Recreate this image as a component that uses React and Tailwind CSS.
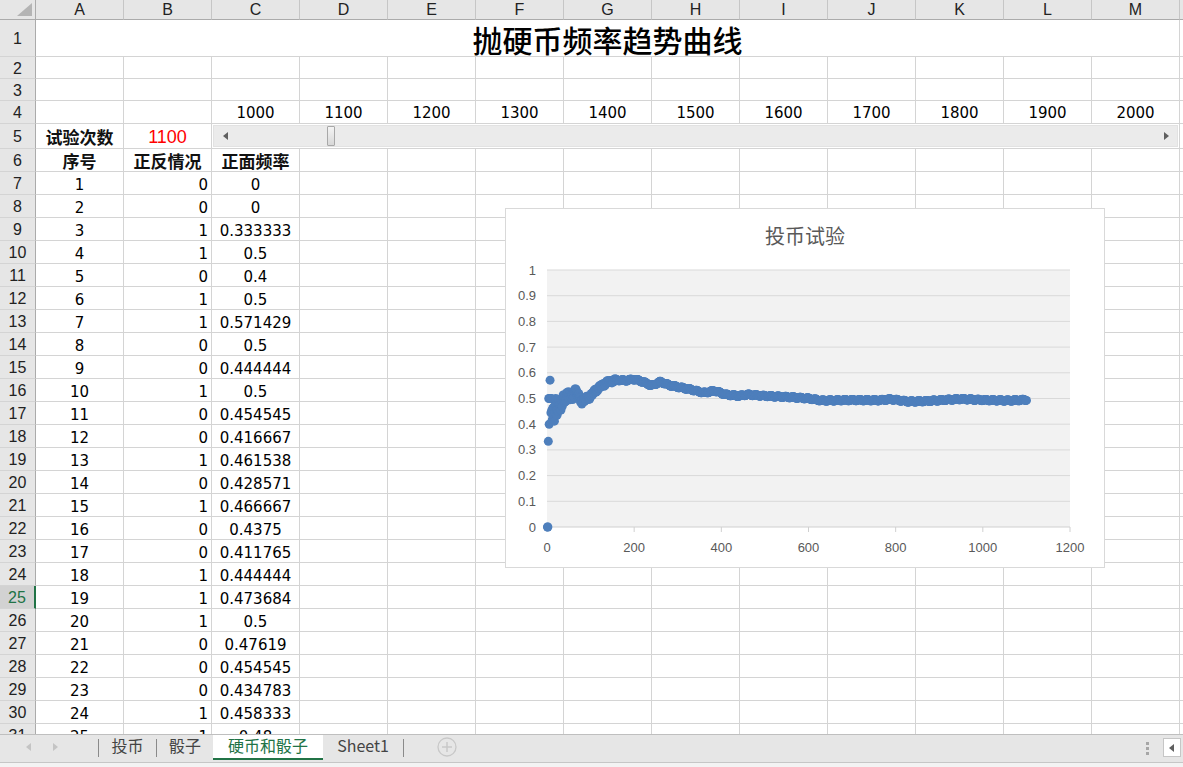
import React from 'react';

const BV = [0,0,1,1,0,1,1,0,0,1,0,0,1,0,1,0,0,1,1,1,0,0,0,1,1];
const CV = ['0','0','0.333333','0.5','0.4','0.5','0.571429','0.5','0.444444','0.5','0.454545','0.416667','0.461538','0.428571','0.466667','0.4375','0.411765','0.444444','0.473684','0.5','0.47619','0.454545','0.434783','0.458333','0.48'];
const COLS = ['A','B','C','D','E','F','G','H','I','J','K','L','M','N'];

const KP = [[25,0.48],[30,0.47],[35,0.49],[40,0.5],[45,0.51],[50,0.52],[55,0.5],[60,0.51],[65,0.535],[70,0.52],[75,0.5],[80,0.49],[90,0.5],[100,0.51],[110,0.53],[125,0.55],[140,0.565],[160,0.572],[180,0.57],[200,0.575],[220,0.565],[240,0.55],[260,0.565],[280,0.552],[300,0.545],[330,0.535],[360,0.522],[385,0.53],[410,0.515],[440,0.51],[460,0.515],[500,0.51],[560,0.505],[600,0.5],[630,0.492],[700,0.494],[760,0.493],[790,0.497],[830,0.488],[870,0.49],[920,0.495],[950,0.498],[1000,0.494],[1060,0.492],[1100,0.495]];

function interp(n) {
  for (let i = 0; i < KP.length - 1; i++) {
    const [a, va] = KP[i];
    const [b, vb] = KP[i + 1];
    if (n >= a && n <= b) return va + (vb - va) * (n - a) / (b - a);
  }
  return KP[KP.length - 1][1];
}

const SERIES = (() => {
  const out = [];
  const freq = CV.map(Number);
  for (let n = 1; n <= 1100; n++) {
    let v;
    if (n <= 25) v = freq[n - 1];
    else {
      v = interp(n);
      if (n < 160) v += (0.6 / n) * Math.sin(n * 2.1) + (0.3 / n) * Math.sin(n * 0.7);
      v += 0.0025 * Math.sin(n * 0.37);
    }
    out.push([n, v]);
  }
  return out;
})();

const CJK = "font-['Noto_Sans_CJK_SC',sans-serif]";
const NUM = "font-['DejaVu_Sans',sans-serif]";

function Cell({ children, className = '', w = 'w-[88px]' }) {
  return (
    <div className={`${w} shrink-0 border-r border-b border-[#d4d4d4] flex items-center overflow-visible whitespace-nowrap ${className}`}>
      {children}
    </div>
  );
}

function RowHead({ label, active }) {
  return (
    <div
      className={`w-[36px] shrink-0 border-b border-b-[#d4d4d4] flex items-center justify-center pt-[2px] text-[16px] font-['Liberation_Sans',sans-serif] ${
        active
          ? 'bg-[#d2d2d2] text-[#217346] border-r-2 border-r-[#217346]'
          : 'bg-[#e6e6e6] text-[#222] border-r border-r-[#ababab]'
      }`}
    >
      {label}
    </div>
  );
}

function Row({ h, label, active, children }) {
  return (
    <div className={`flex ${h} shrink-0`}>
      <RowHead label={label} active={active} />
      {children}
    </div>
  );
}

function EmptyCells({ from = 0 }) {
  return COLS.slice(from).map((c) => <Cell key={c} />);
}

function Chart() {
  const PL = 42, PT = 62, PW = 523, PH = 257;
  const xs = (n) => PL + (n / 1200) * PW;
  const ys = (v) => PT + (1 - v) * PH;
  const yTicks = [0, 0.1, 0.2, 0.3, 0.4, 0.5, 0.6, 0.7, 0.8, 0.9, 1];
  const xTicks = [0, 200, 400, 600, 800, 1000, 1200];
  return (
    <div className="absolute left-[505px] top-[208px] w-[600px] h-[360px] bg-white border border-[#d9d9d9]">
      <svg width="598" height="358" viewBox="1 1 598 358">
        <text x="300" y="36" textAnchor="middle" fontSize="20" fill="#595959" fontFamily="'Noto Sans CJK SC', sans-serif">投币试验</text>
        <rect x={PL} y={PT} width={PW} height={PH} fill="#f2f2f2" />
        {yTicks.map((t) => (
          <g key={t}>
            <line x1={PL} x2={PL + PW} y1={ys(t)} y2={ys(t)} stroke={t === 0 ? '#d0d0d0' : '#d9d9d9'} strokeWidth="1" />
            <text x="31" y={ys(t) + 4.5} textAnchor="end" fontSize="13" fill="#595959" fontFamily="'Liberation Sans', sans-serif">{t}</text>
          </g>
        ))}
        {xTicks.map((t) => (
          <g key={t}>
            <line x1={xs(t)} x2={xs(t)} y1={PT + PH} y2={PT + PH + 5} stroke="#d0d0d0" strokeWidth="1" />
            <text x={xs(t)} y="344" textAnchor="middle" fontSize="13" fill="#595959" fontFamily="'Liberation Sans', sans-serif">{t}</text>
          </g>
        ))}
        {SERIES.map(([n, v]) => (
          <circle key={n} cx={xs(n)} cy={ys(v)} r="4.5" fill="#4e7fbc" />
        ))}
      </svg>
    </div>
  );
}

export default function App() {
  const dataRows = [];
  for (let i = 0; i < 25; i++) {
    const r = i + 7;
    dataRows.push(
      <Row key={r} h="h-[23px]" label={r} active={r === 25}>
        <Cell className={`justify-center pt-[4px] text-[15px] text-black ${NUM}`}>{i + 1}</Cell>
        <Cell className={`justify-end pt-[4px] pr-[3px] text-[15px] text-black ${NUM}`}>{BV[i]}</Cell>
        <Cell className={`justify-center pt-[4px] text-[15px] text-black ${NUM}`}>{CV[i]}</Cell>
        <EmptyCells from={3} />
      </Row>
    );
  }

  return (
    <div className="w-[1183px] h-[767px] overflow-hidden bg-white flex flex-col">
      <div className="relative h-[734px] shrink-0 overflow-hidden">
        {/* column headers */}
        <div className="flex h-[20px]">
          <div className="w-[36px] shrink-0 bg-[#e6e6e6] border-r border-b border-[#ababab] relative">
            <svg width="35" height="19" className="absolute left-0 top-0">
              <polygon points="17,16 32,16 32,3" fill="#b4b4b4" />
            </svg>
          </div>
          {COLS.map((c) => (
            <div
              key={c}
              className="w-[88px] shrink-0 bg-[#e6e6e6] border-r border-r-[#c6c6c6] border-b border-b-[#ababab] flex items-center justify-center text-[16px] text-[#222] font-['Liberation_Sans',sans-serif]"
            >
              {c}
            </div>
          ))}
        </div>

        {/* row 1 */}
        <Row h="h-[37px]" label="1">
          <Cell w="w-[1144px]" className={`justify-center pt-[2px] text-[30px] font-medium text-black ${CJK}`}>
            抛硬币频率趋势曲线
          </Cell>
          <Cell />
        </Row>
        <Row h="h-[22px]" label="2"><EmptyCells /></Row>
        <Row h="h-[22px]" label="3"><EmptyCells /></Row>
        <Row h="h-[23px]" label="4">
          <Cell />
          <Cell />
          {[1000, 1100, 1200, 1300, 1400, 1500, 1600, 1700, 1800, 1900, 2000].map((v) => (
            <Cell key={v} className={`justify-center pt-[3px] text-[15px] text-black ${NUM}`}>{v}</Cell>
          ))}
          <Cell />
        </Row>
        <Row h="h-[25px]" label="5">
          <Cell className={`justify-center pt-[2px] text-[17px] font-bold text-[#111] ${CJK}`}>试验次数</Cell>
          <Cell className="justify-center pt-[2px] text-[18px] text-[#ff0000] font-['Liberation_Sans',sans-serif]">1100</Cell>
          <div className="w-[968px] shrink-0 border-r border-b border-[#d4d4d4] p-px">
            <div className="h-full bg-[#ebebeb] border border-[#e2e2e2] flex items-center relative">
              <svg width="8" height="10" className="ml-[8px]">
                <polygon points="6,1 6,9 1,5" fill="#606060" />
              </svg>
              <div className="ml-[97px] w-[8px] h-[20px] rounded-[1px] border border-[#a8a8a8] bg-gradient-to-b from-[#f4f4f4] to-[#d8d8d8]" />
              <div className="flex-1" />
              <svg width="8" height="10" className="mr-[7px]">
                <polygon points="2,1 2,9 7,5" fill="#606060" />
              </svg>
            </div>
          </div>
          <Cell />
        </Row>
        <Row h="h-[23px]" label="6">
          <Cell className={`justify-center pt-[2px] text-[17px] font-bold text-[#111] ${CJK}`}>序号</Cell>
          <Cell className={`justify-center pt-[2px] text-[17px] font-bold text-[#111] ${CJK}`}>正反情况</Cell>
          <Cell className={`justify-center pt-[2px] text-[17px] font-bold text-[#111] ${CJK}`}>正面频率</Cell>
          <EmptyCells from={3} />
        </Row>
        {dataRows}

        <Chart />
      </div>

      {/* sheet tabs */}
      <div className="h-[28px] shrink-0 bg-[#e6e6e6] border-t border-[#bfbfbf] flex items-start relative">
        <div className="w-[98px] h-full flex items-center">
          <svg width="8" height="10" className="ml-[25px] -mt-[4px]">
            <polygon points="6,1 6,9 1,5" fill="#c4c4c4" />
          </svg>
          <svg width="8" height="10" className="ml-[18px] -mt-[4px]">
            <polygon points="2,1 2,9 7,5" fill="#c4c4c4" />
          </svg>
        </div>
        <div className="w-px h-[18px] mt-[4px] bg-[#8a8a8a]" />
        <div className={`w-[57px] h-[25px] flex items-center justify-center pb-[5px] text-[16px] text-[#444] ${CJK}`}>投币</div>
        <div className="w-px h-[18px] mt-[4px] bg-[#8a8a8a]" />
        <div className={`w-[56px] h-[25px] flex items-center justify-center pb-[5px] text-[16px] text-[#444] ${CJK}`}>骰子</div>
        <div className={`w-[110px] h-[25px] bg-white border-b-2 border-[#217346] flex items-center justify-center pb-[3px] text-[16px] text-[#217346] ${CJK}`}>硬币和骰子</div>
        <div className={`w-[80px] h-[25px] flex items-center justify-center pb-[5px] text-[16px] text-[#444] ${CJK}`}>Sheet1</div>
        <div className="w-px h-[18px] mt-[4px] bg-[#8a8a8a]" />
        <div className="ml-[33px] mt-[2px]">
          <svg width="20" height="20" viewBox="0 0 20 20">
            <circle cx="10" cy="10" r="9" fill="none" stroke="#c8c8c8" strokeWidth="1.3" />
            <line x1="10" y1="5" x2="10" y2="15" stroke="#c8c8c8" strokeWidth="1.5" />
            <line x1="5" y1="10" x2="15" y2="10" stroke="#c8c8c8" strokeWidth="1.5" />
          </svg>
        </div>
        <div className="flex-1" />
        <div className="flex flex-col gap-[2px] mt-[7px] mr-[14px]">
          <div className="w-[3px] h-[3px] bg-[#a6a6a6]" />
          <div className="w-[3px] h-[3px] bg-[#a6a6a6]" />
          <div className="w-[3px] h-[3px] bg-[#a6a6a6]" />
        </div>
        <div className="w-[18px] h-[19px] mt-[3px] mr-[2px] bg-white border border-[#c6c6c6] flex items-center justify-center">
          <svg width="8" height="10">
            <polygon points="6,1 6,9 1,5" fill="#5f5f5f" />
          </svg>
        </div>
      </div>
      <div className="flex-1 bg-[#f3f3f3] border-t border-[#c6c6c6]" />
    </div>
  );
}
